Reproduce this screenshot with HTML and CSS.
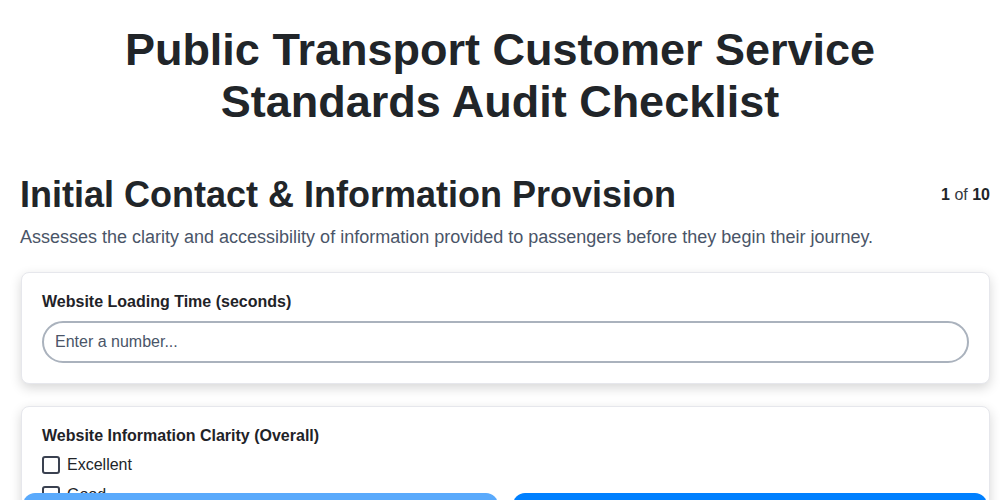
FILE: index.html
```html
<!DOCTYPE html>
<html lang="en">
<head>
<meta charset="utf-8">
<title>Public Transport Customer Service Standards Audit Checklist</title>
<link rel="stylesheet" href="styles.css">
</head>
<body>
<main class="page">
  <h1 class="title">Public Transport Customer Service Standards Audit Checklist</h1>
  <section class="section">
    <div class="section-head">
      <h2 class="section-title">Initial Contact &amp; Information Provision</h2>
      <div class="counter"><b>1</b> of <b>10</b></div>
    </div>
    <p class="section-desc">Assesses the clarity and accessibility of information provided to passengers before they begin their journey.</p>

    <div class="card">
      <label class="q-label" for="q1">Website Loading Time (seconds)</label>
      <input class="text-input" id="q1" type="number" placeholder="Enter a number...">
    </div>

    <div class="card">
      <div class="q-label">Website Information Clarity (Overall)</div>
      <div class="options">
        <label class="option"><input type="checkbox" class="check"><span>Excellent</span></label>
        <label class="option"><input type="checkbox" class="check"><span>Good</span></label>
        <label class="option"><input type="checkbox" class="check"><span>Fair</span></label>
        <label class="option"><input type="checkbox" class="check"><span>Poor</span></label>
      </div>
    </div>
  </section>
</main>
<footer class="nav">
  <button class="btn btn-prev" type="button" aria-label="Previous"></button>
  <button class="btn btn-next" type="button" aria-label="Next"></button>
</footer>
</body>
</html>
```
FILE: styles.css
```css
* { box-sizing: border-box; }
html, body { margin: 0; padding: 0; background: #ffffff; }
body {
  font-family: "Liberation Sans", Arial, sans-serif;
  color: #212529;
}
.page {
  padding: 24px 10px 80px 21px;
}
.title {
  margin: 0 0 0 -11px;
  text-align: center;
  font-size: 45px;
  line-height: 52px;
  font-weight: 700;
  padding: 0 90px;
  color: #212529;
}
.section { margin-top: 45px; }
.section-head {
  display: flex;
  justify-content: space-between;
  align-items: center;
}
.section-title {
  margin: 0 0 0 -1px;
  font-size: 36px;
  line-height: 1.2;
  font-weight: 700;
  color: #212529;
}
.counter {
  font-size: 16px;
  line-height: 24px;
  color: #343a40;
}
.counter b { color: #212529; }
.section-desc {
  margin: 8px 0 21px -1px;
  font-size: 18px;
  line-height: 1.5;
  color: #4a5568;
}
.card {
  background: #fff;
  border: 1px solid #e6e7ec;
  border-radius: 8px;
  padding: 20px;
  margin-bottom: 22px;
  box-shadow: 0 4px 12px rgba(0, 0, 0, 0.16);
}
.q-label {
  display: block;
  font-size: 16px;
  line-height: 18px;
  font-weight: 700;
  color: #1f2328;
}
.text-input {
  display: block;
  width: 100%;
  height: 42px;
  margin-top: 10px;
  padding: 0 11px;
  border: 2px solid #aab2bd;
  border-radius: 21px;
  font-family: inherit;
  font-size: 16px;
  color: #212529;
  background: #fff;
  outline: none;
}
.text-input::placeholder { color: #4a5568; opacity: 1; }
.options {
  display: flex;
  flex-direction: column;
  gap: 6px;
  margin-top: 8px;
}
.option {
  display: flex;
  align-items: center;
  gap: 7px;
  font-size: 16px;
  line-height: 24px;
  color: #212529;
}
.check {
  appearance: none;
  -webkit-appearance: none;
  margin: 0;
  width: 18px;
  height: 18px;
  border: 2px solid #3a4150;
  border-radius: 3px;
  background: #fff;
}
.nav {
  position: fixed;
  left: 23px;
  right: 13px;
  top: 493px;
  display: flex;
  gap: 15px;
}
.btn {
  flex: 1;
  height: 48px;
  border: none;
  border-radius: 12px;
  font-family: inherit;
  font-size: 16px;
  font-weight: 700;
  color: #fff;
}
.btn-prev { background: #5aaafc; }
.btn-next { background: #0080ff; }
```
